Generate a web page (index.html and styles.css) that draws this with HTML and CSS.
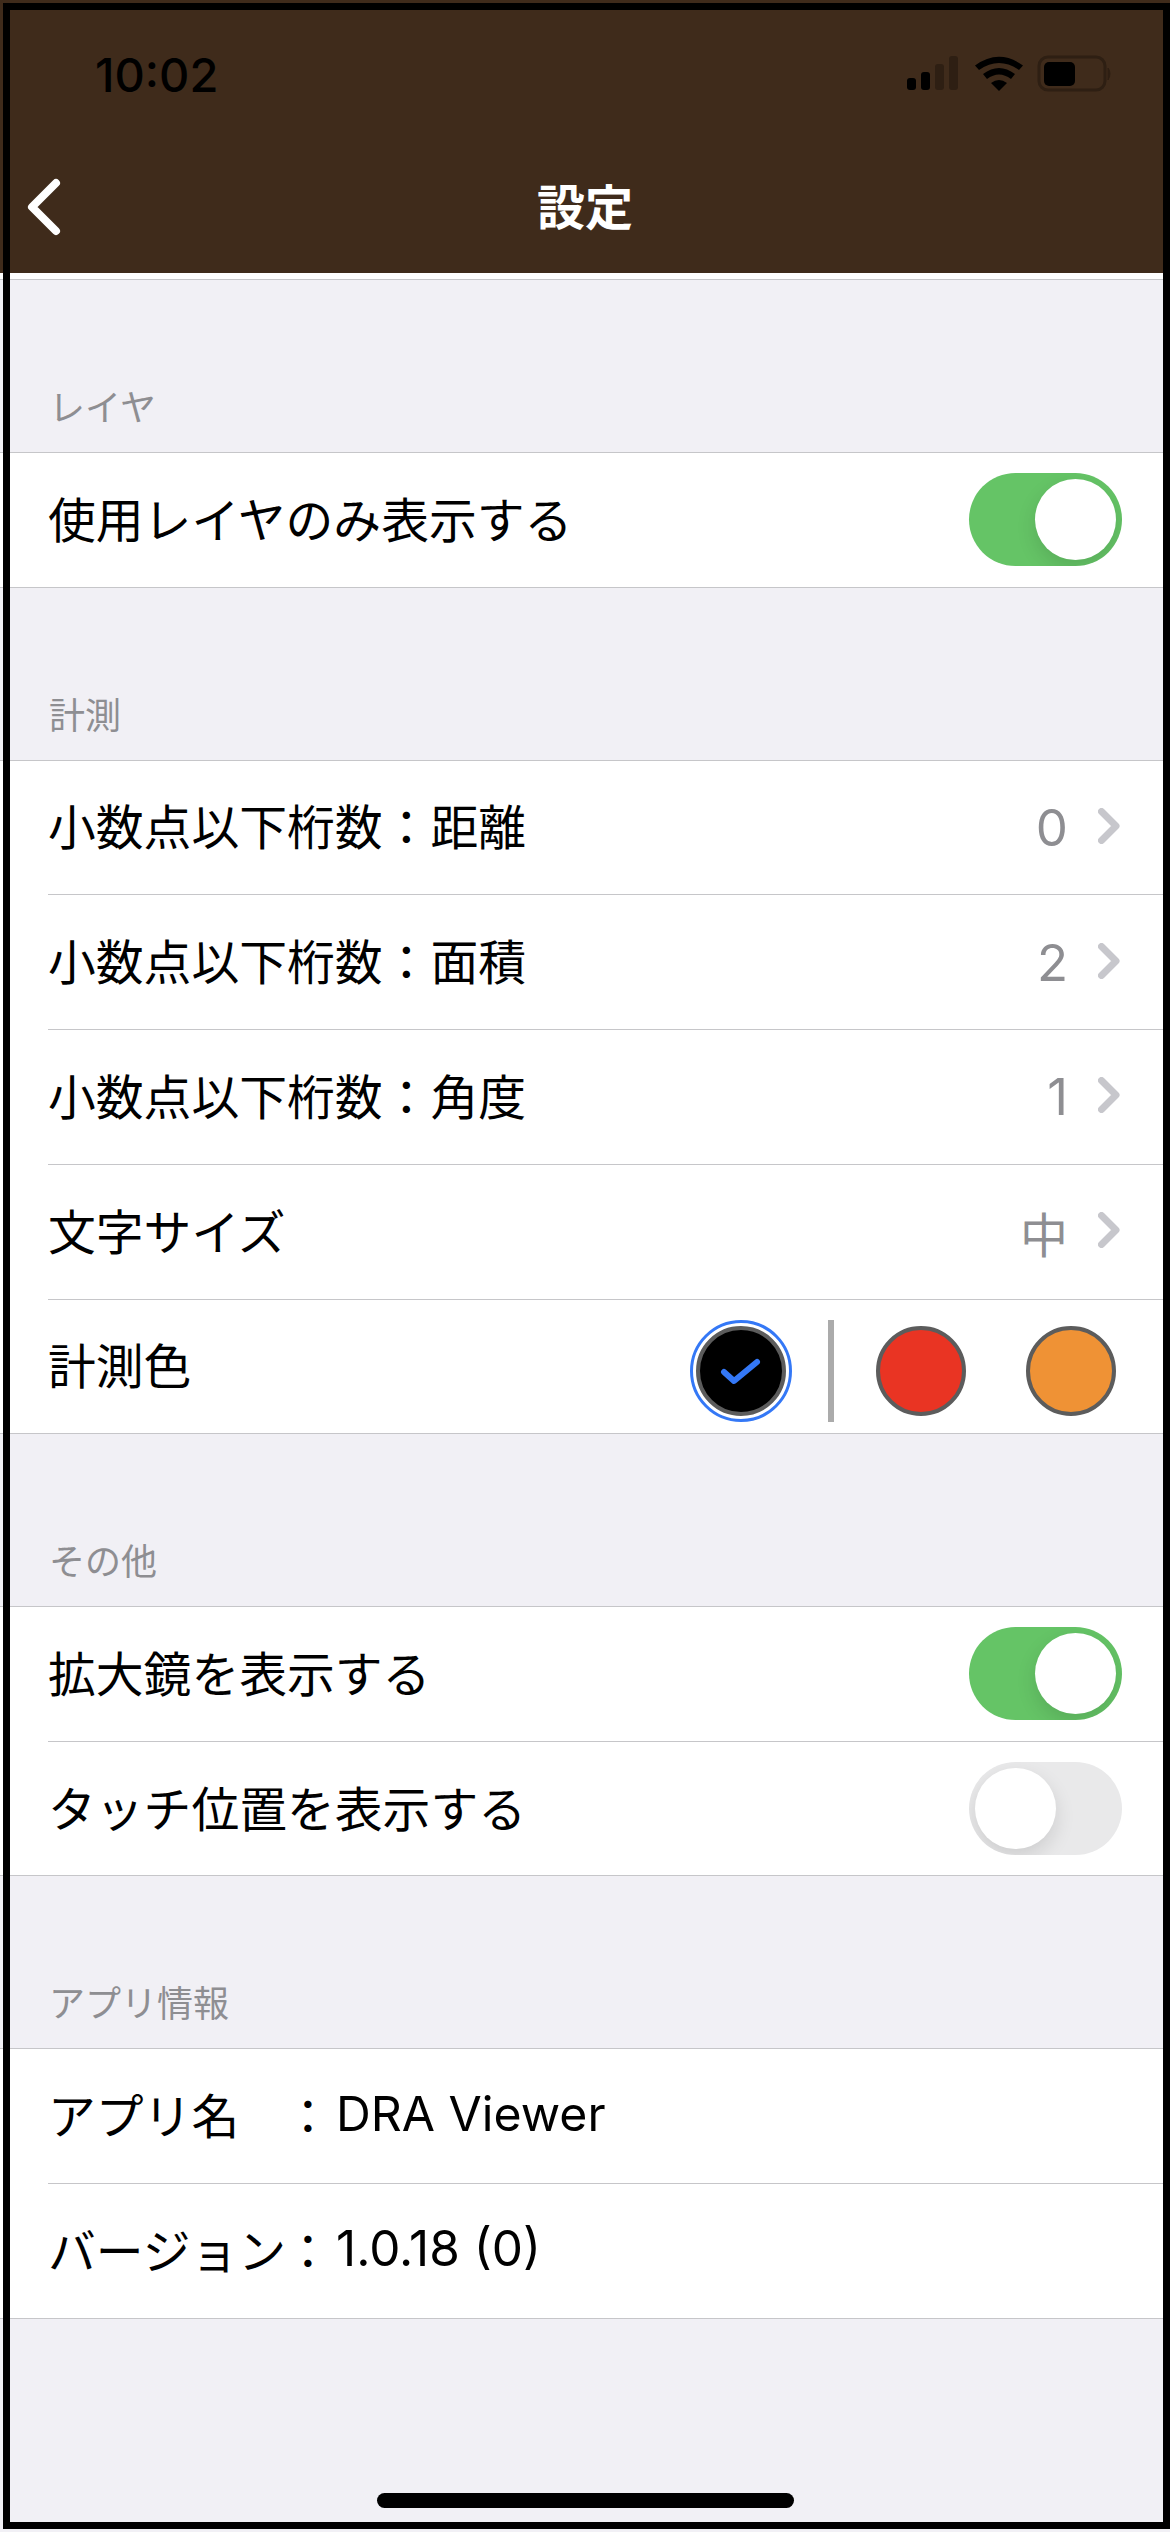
FILE: index.html
```html
<!DOCTYPE html>
<html lang="ja">
<head>
<meta charset="utf-8">
<title>設定</title>
<link rel="stylesheet" href="styles.css">
</head>
<body>
<div class="screen">
  <header class="top">
    <div class="status">
      <span class="time">10:02</span>
      <svg class="status-icons" width="210" height="40" viewBox="0 0 210 40">
        <rect x="0" y="23" width="9" height="12" rx="3" fill="#000"/>
        <rect x="14" y="17" width="9" height="18" rx="3" fill="#000"/>
        <rect x="28" y="9" width="9" height="26" rx="3" fill="#2e1f13"/>
        <rect x="42" y="1" width="9" height="34" rx="3" fill="#2e1f13"/>
        <path d="M68 10.5 Q92 -7 116 10.5 L112 15 Q92 1 72 15 Z" fill="#000"/>
        <path d="M76 19 Q92 7 108 19 L104 24 Q92 15 80 24 Z" fill="#000"/>
        <path d="M84 28 Q92 22 100 28 L92 36 Z" fill="#000"/>
        <rect x="132" y="2" width="66" height="33" rx="9" fill="none" stroke="#2e1f13" stroke-width="3"/>
        <rect x="137" y="7" width="31" height="24" rx="5" fill="#000"/>
        <path d="M201 13 Q205 18 201 25 Z" fill="#2e1f13" stroke="#2e1f13" stroke-width="1"/>
      </svg>
    </div>
    <nav class="nav">
      <svg class="back" width="34" height="60" viewBox="0 0 34 60"><path d="M29 6 L5 30 L29 54" fill="none" stroke="#fff" stroke-width="8" stroke-linecap="round" stroke-linejoin="round"/></svg>
      <h1 class="title">設定</h1>
    </nav>
  </header>
  <div class="top-cap"></div>

  <section class="group">
    <h2 class="group-label">レイヤ</h2>
    <div class="list">
      <div class="row last"><span class="label">使用レイヤのみ表示する</span><span class="switch on"><i class="knob"></i></span></div>
    </div>
  </section>

  <section class="group">
    <h2 class="group-label">計測</h2>
    <div class="list">
      <div class="row"><span class="label">小数点以下桁数：距離</span><span class="value">0<svg class="chev" width="22" height="36" viewBox="0 0 22 36"><path d="M3.5 3.5 L18 18 L3.5 32.5" fill="none" stroke="#c7c7cc" stroke-width="7" stroke-linecap="round" stroke-linejoin="round"/></svg></span></div>
      <div class="row"><span class="label">小数点以下桁数：面積</span><span class="value">2<svg class="chev" width="22" height="36" viewBox="0 0 22 36"><path d="M3.5 3.5 L18 18 L3.5 32.5" fill="none" stroke="#c7c7cc" stroke-width="7" stroke-linecap="round" stroke-linejoin="round"/></svg></span></div>
      <div class="row"><span class="label">小数点以下桁数：角度</span><span class="value">1<svg class="chev" width="22" height="36" viewBox="0 0 22 36"><path d="M3.5 3.5 L18 18 L3.5 32.5" fill="none" stroke="#c7c7cc" stroke-width="7" stroke-linecap="round" stroke-linejoin="round"/></svg></span></div>
      <div class="row"><span class="label">文字サイズ</span><span class="value cjk">中<svg class="chev" width="22" height="36" viewBox="0 0 22 36"><path d="M3.5 3.5 L18 18 L3.5 32.5" fill="none" stroke="#c7c7cc" stroke-width="7" stroke-linecap="round" stroke-linejoin="round"/></svg></span></div>
      <div class="row last"><span class="label">計測色</span>
        <div class="swatches">
          <span class="ring"><span class="dot black"><svg width="42" height="30" viewBox="0 0 42 30"><path d="M4 16 L14 25 L37 6" fill="none" stroke="#3478f6" stroke-width="6" stroke-linecap="round" stroke-linejoin="round"/></svg></span></span>
          <span class="divider"></span>
          <span class="dot red"></span>
          <span class="dot orange"></span>
        </div>
      </div>
    </div>
  </section>

  <section class="group">
    <h2 class="group-label">その他</h2>
    <div class="list">
      <div class="row"><span class="label">拡大鏡を表示する</span><span class="switch on"><i class="knob"></i></span></div>
      <div class="row last"><span class="label">タッチ位置を表示する</span><span class="switch off"><i class="knob"></i></span></div>
    </div>
  </section>

  <section class="group">
    <h2 class="group-label">アプリ情報</h2>
    <div class="list">
      <div class="row"><span class="label info"><span class="info-key">アプリ名</span><span class="info-sep">：</span><span class="name">DRA Viewer</span></span></div>
      <div class="row last"><span class="label info"><span class="info-key">バージョン</span><span class="info-sep">：</span><span class="ver">1.0.18 (0)</span></span></div>
    </div>
  </section>

  <div class="home"></div>
  <div class="frame"></div>
</div>
</body>
</html>
```
FILE: styles.css
```css
* { box-sizing: border-box; }
html, body { margin: 0; padding: 0; }
body {
  width: 1170px;
  height: 2532px;
  overflow: hidden;
  background: #f1f0f5;
  font-family: Inter, "Noto Sans CJK JP", sans-serif;
}
.screen { position: relative; width: 1170px; height: 2532px; }
.top { height: 273px; background: #3f2b1b; display: flex; flex-direction: column; }
.status { height: 148px; padding: 50px 0 0 95px; display: flex; align-items: flex-start; justify-content: space-between; }
.time { font-size: 47px; line-height: 50px; font-weight: 500; color: #000; }
.status-icons { margin: 5px 53px 0 0; display: block; }
.nav { position: relative; flex: 1; display: flex; align-items: center; justify-content: center; }
.back { position: absolute; left: 27px; top: 29px; }
.title { margin: 0; font-size: 48px; line-height: 60px; font-weight: 700; color: #fff; font-family: "Noto Sans CJK JP", sans-serif; position: relative; top: -7px; }
.top-cap { height: 7px; background: #fff; border-bottom: 1px solid #c6c6c9; }
.group-label {
  margin: 0;
  height: 172px;
  padding: 0 0 25px 49px;
  display: flex;
  align-items: flex-end;
  font-size: 36px;
  line-height: 44px;
  font-weight: 400;
  color: #8e8e92;
  font-family: "Noto Sans CJK JP", sans-serif;
}
.list { background: #fff; border-top: 1px solid #c6c6c9; border-bottom: 1px solid #c6c6c9; }
.row {
  height: 134.75px;
  margin-left: 48px;
  padding-right: 48px;
  display: flex;
  align-items: center;
  justify-content: space-between;
  font-size: 47.8px;
  color: #000;
  border-bottom: 1px solid #c6c6c9;
}
.row.last { border-bottom: 0; height: 133.5px; }
.label { padding-bottom: 5px; }
.value { display: flex; align-items: center; gap: 30px; color: #8e8e92; font-size: 51px; }
.value.cjk { font-size: 48px; }
.chev { display: block; margin: -3px 2px 0 0; }
.switch { position: relative; display: block; width: 153px; height: 93px; border-radius: 47px; overflow: hidden; }
.switch.on { background: #65c466; }
.switch.off { background: #e9e9ea; }
.knob { position: absolute; top: 6px; width: 81px; height: 81px; border-radius: 50%; background: #fff; box-shadow: 0 8px 20px rgba(0,0,0,.12); }
.on .knob { right: 6px; }
.off .knob { left: 6px; }
.swatches { display: flex; align-items: center; margin: 10px 6px 0 0; }
.ring { width: 102px; height: 102px; border-radius: 50%; border: 3px solid #3478f6; background: #fff; display: flex; align-items: center; justify-content: center; margin-right: 36px; }
.dot { width: 90px; height: 90px; border-radius: 50%; border: 4px solid #5c5c5c; display: flex; align-items: center; justify-content: center; }
.black { background: #000; }
.red { background: #e93423; margin-left: 42px; }
.orange { background: #ef9235; margin-left: 60px; }
.divider { width: 6px; height: 102px; background: #ababab; }
.info { display: flex; align-items: center; }
.info-key { display: inline-block; width: 236px; white-space: nowrap; }
.info-sep { display: inline-block; width: 52px; }
.name { font-size: 48.2px; }
.ver { font-size: 49.5px; }
.home { position: absolute; left: 377px; top: 2493px; width: 417px; height: 15px; border-radius: 8px; background: #000; }
.frame { position: absolute; left: 3px; top: 3px; width: 1167px; height: 2526px; border: 7px solid #000; pointer-events: none; }
```
